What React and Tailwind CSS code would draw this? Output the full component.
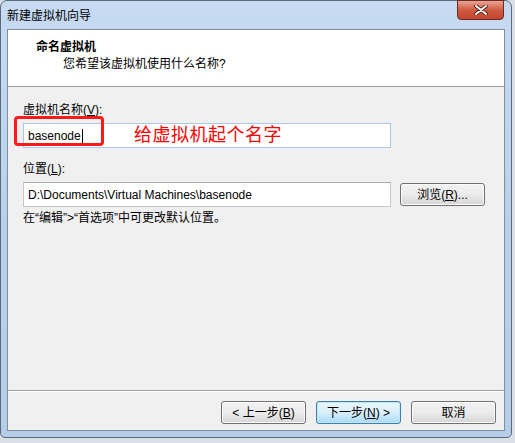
import React from "react";

const font = { fontFamily: '"Liberation Sans", "Noto Sans CJK SC", sans-serif' };

function WinButton({ children, primary, className = "" }) {
  return (
    <div
      className={
        "h-[23px] w-[85px] rounded-[3px] border flex items-center justify-center text-[12px] text-black " +
        (primary
          ? "border-[#3c7fb1] bg-gradient-to-b from-[#eaf6fd] via-[#d9f0fc] to-[#a7d9f5] shadow-[inset_0_0_0_1px_#c4e5f6] "
          : "border-[#707070] bg-gradient-to-b from-[#f2f2f2] via-[#ebebeb] to-[#d6d6d6] shadow-[inset_0_0_0_1px_#fcfcfc] ") +
        className
      }
    >
      {children}
    </div>
  );
}

export default function App() {
  return (
    <div className="w-[515px] h-[443px] bg-[#d9dfe6] overflow-hidden" style={font}>
      <div className="w-[512px] h-[438px] rounded-t-[7px] rounded-b-[5px] border border-[#5d6b78] bg-gradient-to-b from-[#c6dbf2] via-[#b9d1ec] to-[#b4cde9] flex flex-col px-[6px] pb-[6px] relative">
        {/* Title bar */}
        <div className="h-[28px] flex items-start justify-between shrink-0">
          <div className="pt-[7px] pl-0 text-[12px] leading-[16px] text-black">新建虚拟机向导</div>
          <div className="mt-[-1px] mr-[1px] w-[47px] h-[20px] rounded-b-[4px] border border-[#6d2a22] bg-gradient-to-b from-[#e8a393] via-[#cf5a42] to-[#c5452d] flex items-center justify-center">
            <svg width="14" height="10" viewBox="0 0 14 10">
              <path d="M2 1 L12 9 M12 1 L2 9" stroke="#4a1a12" strokeWidth="3.6" strokeLinecap="round" />
              <path d="M2 1 L12 9 M12 1 L2 9" stroke="#ffffff" strokeWidth="2" strokeLinecap="round" />
            </svg>
          </div>
        </div>
        {/* Client area */}
        <div className="flex-1 border border-[#7f8fa0] bg-[#f0f0f0] flex flex-col">
          <div className="h-[57px] bg-white border-b border-[#a0a0a0] pt-[9px] shrink-0">
            <div className="pl-[28px] text-[12px] leading-[16px] font-bold text-black">命名虚拟机</div>
            <div className="pl-[55px] mt-[1px] text-[12px] leading-[16px] text-black">您希望该虚拟机使用什么名称?</div>
          </div>
          <div className="flex-1 flex flex-col px-[15px] pt-[15px] relative">
            <div className="text-[12px] leading-[16px] text-black">
              虚拟机名称(<span className="underline">V</span>):
            </div>
            <div className="mt-[5px] w-[368px] h-[25px] bg-white border border-[#a9c7e6] flex items-center pl-[4px] text-[12px] text-black relative">
              basenode<span className="ml-[1px] w-px h-[14px] bg-black" />
              <span className="absolute left-[110px] top-[-1px] text-[18px] leading-[24px] text-[#ff0000] tracking-[0.5px]">
                给虚拟机起个名字
              </span>
            </div>
            <div className="absolute left-[6px] top-[29px] w-[90px] h-[30px] rounded-[4px] border-[3px] border-[#ff1a1a]" />
            <div className="mt-[13px] text-[12px] leading-[16px] text-black">
              位置(<span className="underline">L</span>):
            </div>
            <div className="mt-[5px] flex items-center">
              <div className="w-[368px] h-[25px] bg-white border border-[#c4c8ce] border-t-[#abadb3] flex items-center pl-[4px] text-[12px] text-black">
                D:\Documents\Virtual Machines\basenode
              </div>
              <WinButton className="ml-[9px]">
                浏览(<span className="underline">R</span>)...
              </WinButton>
            </div>
            <div className="mt-[3px] text-[12px] leading-[16px] text-black">
              在“编辑”&gt;“首选项”中可更改默认位置。
            </div>
          </div>
          <div className="h-[40px] border-t border-[#a0a0a0] shadow-[inset_0_1px_0_#ffffff] flex items-start justify-end gap-[10px] pt-[10px] pr-[8px] shrink-0">
            <WinButton>
              &lt; 上一步(<span className="underline">B</span>)
            </WinButton>
            <WinButton primary>
              下一步(<span className="underline">N</span>) &gt;
            </WinButton>
            <WinButton>取消</WinButton>
          </div>
        </div>
      </div>
    </div>
  );
}
